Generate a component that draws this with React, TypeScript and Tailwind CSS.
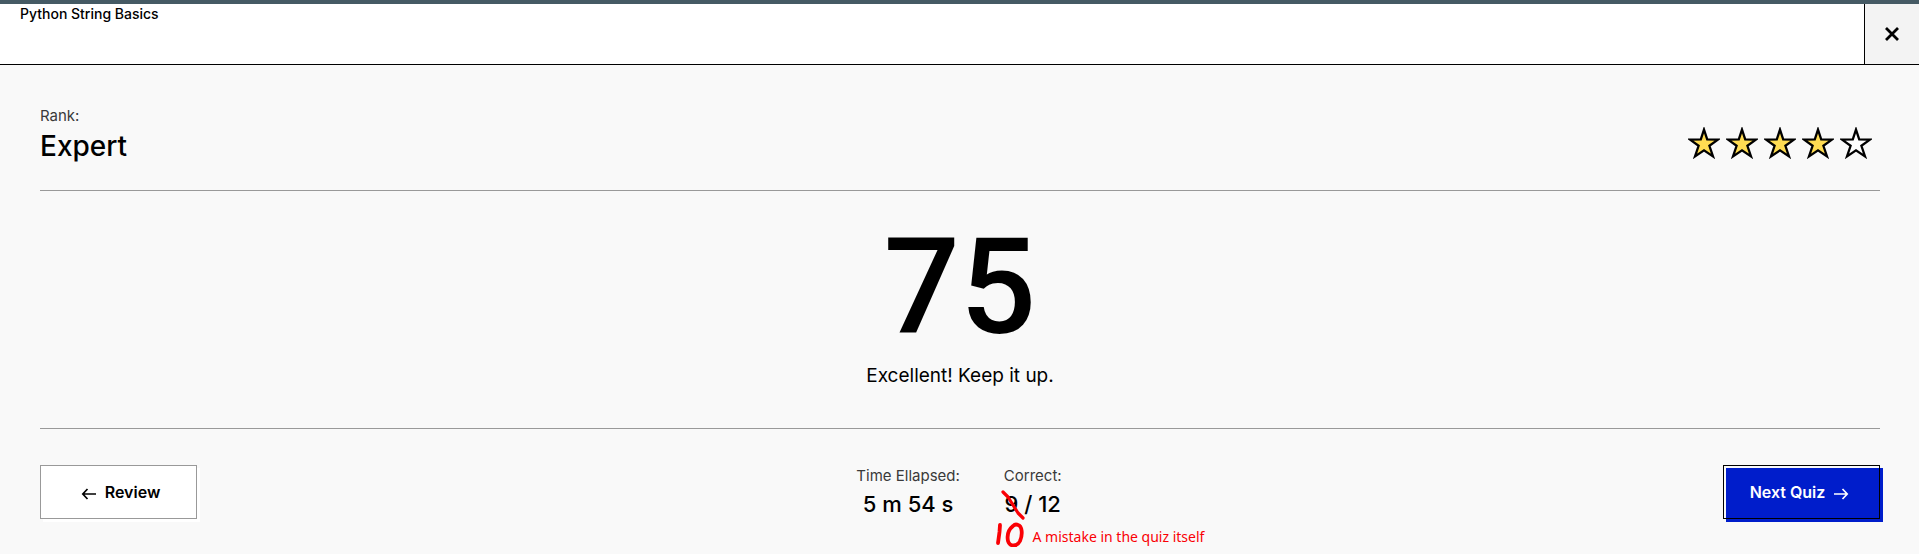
import { ReactNode } from "react";

const STAR =
  "M16 2.6 L19.2 12.4 L30 12.6 L21.4 18.8 L25 29.4 L16 23.4 L7 29.4 L10.6 18.8 L2 12.6 L12.8 12.4 Z";

function Star({ filled }: { filled: boolean }) {
  return (
    <svg viewBox="0 0 32 32" className="size-8" aria-hidden="true">
      <path d={STAR} fill={filled ? "#ffdc52" : "#ffffff"} stroke="#000" strokeWidth="2.3" />
    </svg>
  );
}

function Arrow({ back = false }: { back?: boolean }) {
  return (
    <svg
      viewBox="0 0 16 12"
      className="mt-1 h-3 w-4"
      fill="none"
      stroke="currentColor"
      strokeWidth="1.7"
      aria-hidden="true"
    >
      <path d={back ? "M15 6 H2 M6.5 1 L1.8 6 L6.5 11" : "M1 6 H14 M9.5 1 L14.2 6 L9.5 11"} />
    </svg>
  );
}

function Stat({ label, children }: { label: string; children: ReactNode }) {
  return (
    <div className="flex flex-col items-center">
      <dt className="text-[15px] leading-5 text-[#3a3a3a]">{label}</dt>
      <dd className="text-[22px] font-medium leading-9">{children}</dd>
    </div>
  );
}

function Correction() {
  return (
    <div className="absolute -left-2.5 -top-1 flex items-start text-[#fa0005]">
      <svg
        viewBox="0 0 32 60"
        className="h-[60px] w-8 shrink-0"
        fill="none"
        stroke="currentColor"
        strokeLinecap="round"
        strokeLinejoin="round"
        role="img"
        aria-label="10"
      >
        <path d="M8 5 L13 10 L18 18 L23 26 L28 31" strokeWidth="3.2" />
        <path d="M5 38 L4.500 45 L3 56" strokeWidth="3.8" />
        <path
          d="M18 39 C13 43 12 49 13 54 C15 60 22 60 25 54 C28 47 27 39 23 38 C21 37 19 38 18 39"
          strokeWidth="3.8"
        />
      </svg>
      <span className="ml-1.5 mt-10 whitespace-nowrap font-['Noto_Sans',sans-serif] text-sm font-normal leading-5">
        A mistake in the quiz itself
      </span>
    </div>
  );
}

export default function App() {
  return (
    <div className="min-h-screen bg-[#f9f9f9] font-['Inter',sans-serif] text-black">
      <header className="flex h-[65px] border-b border-t-4 border-b-black border-t-[#455a64] bg-white">
        <h1 className="flex-1 px-5 text-sm font-medium leading-5">Python String Basics</h1>
        <button
          type="button"
          aria-label="Close"
          className="flex w-[55px] items-center justify-center border-l border-black bg-[#f3f3f3]"
        >
          <svg viewBox="0 0 14 14" className="size-3.5" stroke="#000" strokeWidth="2.8" aria-hidden="true">
            <path d="M1 1 L13 13 M13 1 L1 13" />
          </svg>
        </button>
      </header>
      <main className="pl-10 pr-[39px]">
        <section className="flex items-center justify-between border-b border-[#999] pb-[26px] pt-[41px]">
          <div>
            <p className="text-[15px] leading-5 text-[#3a3a3a]">Rank:</p>
            <p className="mt-0.5 text-[28px] font-medium leading-9">Expert</p>
          </div>
          <div className="mr-2 mt-4 flex gap-1.5" role="img" aria-label="4 of 5 stars">
            {[1, 2, 3, 4, 5].map((n) => (
              <Star key={n} filled={n <= 4} />
            ))}
          </div>
        </section>
        <section className="flex flex-col items-center border-b border-[#999] pb-[41px] pt-5">
          <p className="font-['Roboto',sans-serif] text-[134px] font-medium leading-[154px]">75</p>
          <p className="text-[19px] leading-[22px]">Excellent! Keep it up.</p>
        </section>
        <section className="grid grid-cols-[1fr_auto_1fr] items-start pt-9">
          <button
            type="button"
            className="flex h-[54px] w-[157px] items-center justify-center gap-2 border border-[#999] bg-white pl-1 font-semibold shadow-[3px_3px_0_#fff]"
          >
            <Arrow back />
            Review
          </button>
          <dl className="flex gap-11 pr-0.5 pt-px">
            <Stat label="Time Ellapsed:">5 m 54 s</Stat>
            <Stat label="Correct:">
              <span className="relative">
                9 / 12
                <Correction />
              </span>
            </Stat>
          </dl>
          <button
            type="button"
            className="relative h-[54px] w-[157px] justify-self-end font-semibold text-white"
          >
            <span className="absolute left-[3px] top-[3px] size-full bg-[#001dcb]" />
            <span className="relative flex size-full items-center justify-center gap-2 border border-black pr-1">
              Next Quiz
              <Arrow />
            </span>
          </button>
        </section>
      </main>
    </div>
  );
}
